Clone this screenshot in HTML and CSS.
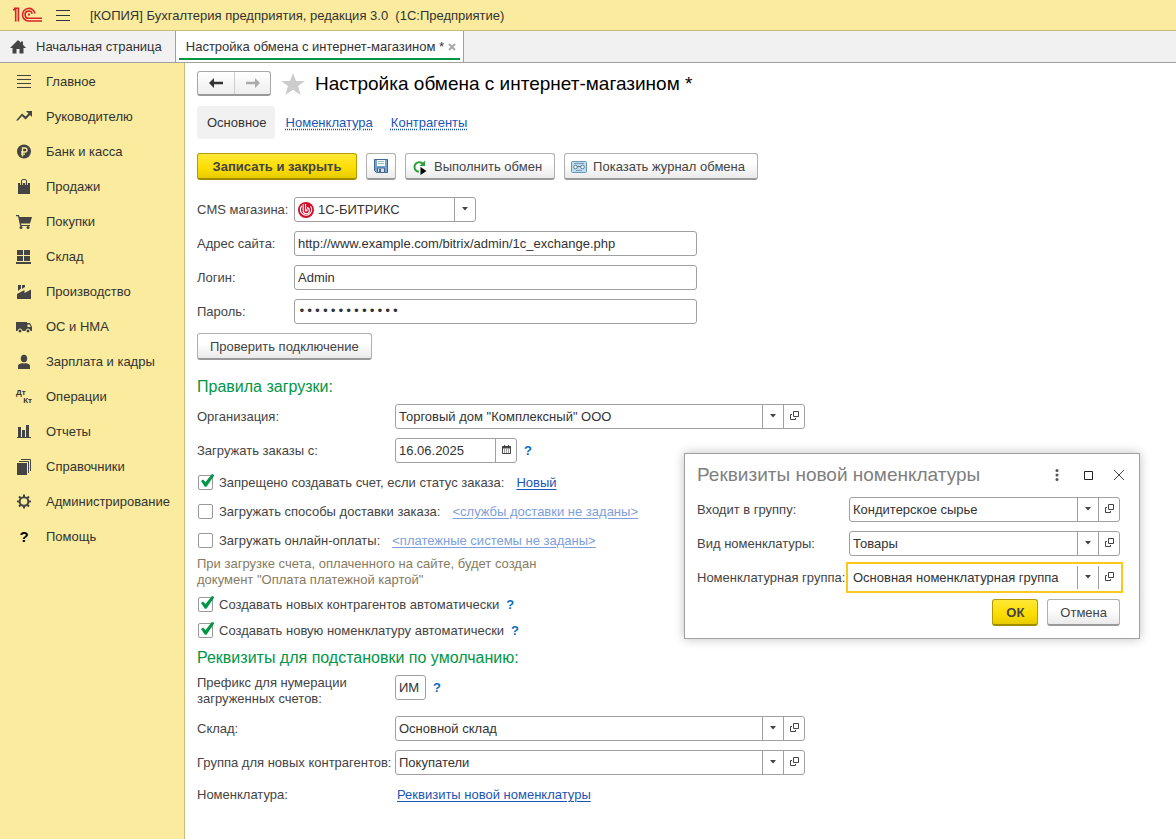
FILE: index.html
```html
<!DOCTYPE html>
<html lang="ru">
<head>
    <meta charset="UTF-8">
    <meta name="viewport" content="width=device-width, initial-scale=1.0">
    <title>Настройка обмена с интернет-магазином</title>
    <link rel="stylesheet" href="styles.css">
</head>
<body>
    <svg class="sprite" width="0" height="0" aria-hidden="true">
        <symbol id="i-arrow" viewBox="0 0 6 4"><path d="M0 0h6L3 3.5z" fill="#444"/></symbol>
        <symbol id="i-open" viewBox="0 0 9 9"><path d="M3.500.5h5v5h-5zM2 3.500H.5v5h5V7" fill="none" stroke="#444"/></symbol>
    </svg>

    <header class="topbar">
        <svg class="logo" width="30" height="16" viewBox="0 0 30 16" fill="none" stroke="#d9232b" stroke-width="1.600">
            <path d="M0 2.800h2.700v11.700M1 1.200h4.400v13.300"/>
            <path d="M22 6.500A6.300 6.300 0 1 0 15.500 14H29"/>
            <path d="M19.200 6.800A3.600 3.600 0 1 0 15.800 11.300H29"/>
            <path d="M15 7.500h2" stroke-width="2"/>
        </svg>
        <button class="burger" aria-label="Меню"><span></span><span></span><span></span></button>
        <span class="app-name">[КОПИЯ] Бухгалтерия предприятия, редакция 3.0&nbsp; (1С:Предприятие)</span>
    </header>

    <nav class="tabs">
        <a href="#" class="tab">
            <svg width="16" height="14" viewBox="0 0 16 14" fill="#444"><path d="M8 0l3 2.800V1.500h2v3.200L16 8h-2.500v5.500H9.500V9h-3v4.500h-4V8H0z"/></svg>
            Начальная страница
        </a>
        <div class="tab active">
            <span>Настройка обмена с интернет-магазином *</span>
            <button class="tab-close" aria-label="Закрыть вкладку">
                <svg width="8" height="8" viewBox="0 0 8 8" stroke="#aaa" stroke-width="2"><path d="M1 1l6 6M7 1L1 7"/></svg>
            </button>
        </div>
    </nav>

    <div class="workspace">
        <aside class="sidebar">
            <a href="#"><svg viewBox="0 0 16 16" stroke="#444" stroke-width="1"><path d="M1 1.500h14M1 5.500h14M1 9.500h14M1 13.500h14"/></svg>Главное</a>
            <a href="#"><svg viewBox="0 0 16 16" fill="#444"><path d="M10 2h6v6l-2-2-4.500 4.500L6 7 2 11.500H0L6 4.500l3.500 3L12.500 4.500z"/></svg>Руководителю</a>
            <a href="#"><svg viewBox="0 0 16 16"><circle cx="8" cy="7.500" r="7" fill="#444"/><path d="M6.500 12.500V4H9a2 2 0 0 1 0 4H5M5 10.200h4" fill="none" stroke="#faeb9e" stroke-width="1.300"/></svg>Банк и касса</a>
            <a href="#"><svg viewBox="0 0 16 16"><path d="M2 4h12v11H2z" fill="#444"/><path d="M5.500 6V2.500A1.500 1.500 0 0 1 7 1h2a1.500 1.500 0 0 1 1.500 1.500V6" fill="none" stroke="#faeb9e" stroke-width="2.600"/><path d="M5.500 6V2A1.500 1.500 0 0 1 7 .5h2A1.500 1.500 0 0 1 10.500 2v4" fill="none" stroke="#444"/></svg>Продажи</a>
            <a href="#"><svg viewBox="0 0 16 16" fill="#444"><path d="M0 1h3l.6 2H16l-2 6.500H5l.3 1.500H14v1H4.200L2 2.200H0z"/><circle cx="5" cy="13.500" r="1.500"/><circle cx="12" cy="13.500" r="1.500"/></svg>Покупки</a>
            <a href="#"><svg viewBox="0 0 16 16" fill="#444"><path d="M1 1h6v5H1zM8 1h6v5H8zM1 7h6v5H1zM8 7h6v5H8zM0 13h15v2H0z"/></svg>Склад</a>
            <a href="#"><svg viewBox="0 0 16 16" fill="#444"><path d="M1 15V10l7.500-4v3L15 5.500V15zM2 1h3v3.500L2 7zM6 1h3v2L6 5z"/></svg>Производство</a>
            <a href="#"><svg viewBox="0 0 16 16"><path d="M0 3h11v1h3l2 4v4H0z" fill="#444"/><path d="M11.500 5.500h2l1.200 2.500h-3.200z" fill="#faeb9e"/><g fill="#444" stroke="#faeb9e"><circle cx="4" cy="12" r="2"/><circle cx="12" cy="12" r="2"/></g></svg>ОС и НМА</a>
            <a href="#"><svg viewBox="0 0 16 16" fill="#444"><ellipse cx="8" cy="4.500" rx="3.200" ry="3.800"/><path d="M2 15v-3q0-1.500 1.500-2L6.500 9q1.500 1 3 0l3 1q1.500.5 1.500 2v3z"/></svg>Зарплата и кадры</a>
            <a href="#"><span class="dtkt" aria-hidden="true"><b>Дт</b><b>Кт</b></span>Операции</a>
            <a href="#"><svg viewBox="0 0 16 16" fill="#444"><path d="M2 3h3v10H2zM6 6h3v7H6zM10 1h3v12h-3zM1 13h14v1H1z"/></svg>Отчеты</a>
            <a href="#"><svg viewBox="0 0 16 16"><path d="M1 4h10v12H1z" fill="#444"/><path d="M3 2.500h9.500V14M5 .5h9.500V12" fill="none" stroke="#444"/></svg>Справочники</a>
            <a href="#"><svg viewBox="0 0 16 16" fill="none" stroke="#444"><circle cx="8" cy="7.500" r="4.300" stroke-width="2"/><path d="M8 .5V3M8 12v2.500M1 7.500h2.500M12.500 7.500H15M3 2.500l1.800 1.800M11.200 10.700l1.800 1.800M13 2.500l-1.800 1.800M4.800 10.700L3 12.500" stroke-width="2"/></svg>Администрирование</a>
            <a href="#"><b class="qmark">?</b>Помощь</a>
        </aside>

        <main class="content">
            <div class="title-row">
                <div class="history">
                    <button aria-label="Назад"><svg width="14" height="10" viewBox="0 0 14 10" fill="#333"><path d="M0 5l5-5v3.800h9v2.400H5V10z"/></svg></button>
                    <button aria-label="Вперед"><svg width="14" height="10" viewBox="0 0 14 10" fill="#aaa"><path d="M14 5L9 0v3.800H0v2.400h9V10z"/></svg></button>
                </div>
                <svg class="star" width="24" height="22" viewBox="0 0 24 22" fill="#ccc"><path d="M12 0l3 8h9l-7 5 2.700 9L12 16.800 4.300 22 7 13 0 8h9z"/></svg>
                <h1>Настройка обмена с интернет-магазином *</h1>
            </div>

            <nav class="sections">
                <span class="current">Основное</span>
                <a href="#">Номенклатура</a>
                <a href="#">Контрагенты</a>
            </nav>

            <div class="toolbar">
                <button class="btn primary">Записать и закрыть</button>
                <button class="btn icon-only" aria-label="Записать">
                    <svg width="14" height="14" viewBox="0 0 14 14"><path d="M.5.5h13v13h-11l-2-2z" fill="#74a4d4" stroke="#40678f"/><path d="M3 1h8v6H3z" fill="#fff"/><path d="M4 2.500h6M4 4.500h6" stroke="#9bb"/><path d="M3.500 9h7v4.500h-7z" fill="#ddd" stroke="#40678f"/><path d="M5 10h2v3H5z" fill="#40678f"/></svg>
                </button>
                <button class="btn">
                    <svg width="16" height="16" viewBox="0 0 16 16"><path d="M11 5A4.800 4.800 0 1 0 7 12.800" fill="none" stroke="#2aa13a" stroke-width="2"/><path d="M13 1.500v5.500H7.500z" fill="#2aa13a"/><path d="M8.500 8l6 4-6 4z" fill="#000"/></svg>
                    Выполнить обмен
                </button>
                <button class="btn">
                    <svg width="16" height="12" viewBox="0 0 16 12"><rect x=".5" y=".5" width="15" height="11" rx="1" fill="#bcdcf2" stroke="#6a94b5"/><path d="M3 2.500h10M5 9.500h6" stroke="#7c99ad"/><g fill="#fff" stroke="#55798f"><circle cx="4.500" cy="6" r="1.800"/><circle cx="11.500" cy="6" r="1.800"/></g><path d="M6 5.500h4" stroke="#55798f"/></svg>
                    Показать журнал обмена
                </button>
            </div>

            <form class="connection">
                <label for="cms">CMS магазина:</label>
                <div class="field cms">
                    <svg class="bitrix" width="16" height="16" viewBox="0 0 17 17"><circle cx="8.500" cy="8.500" r="8.500" fill="#d0112b"/><g fill="none" stroke="#fff" stroke-width="1.200"><path d="M4 4.200a6 6 0 1 0 9.300.3"/><path d="M5.500 2.500v6.700a3.300 3.300 0 1 0 4-3.200"/><path d="M8 2v7.500q2 .5 1.500-1.800"/></g></svg>
                    <div class="pick"><select id="cms"><option>1С-БИТРИКС</option></select><svg><use href="#i-arrow"/></svg></div>
                </div>

                <label for="site">Адрес сайта:</label>
                <input class="field" id="site" type="text" value="http://www.example.com/bitrix/admin/1c_exchange.php">

                <label for="login">Логин:</label>
                <input class="field" id="login" type="text" value="Admin">

                <label for="password">Пароль:</label>
                <input class="field" id="password" type="password" value="1234567890123">
            </form>
            <button class="btn check-btn">Проверить подключение</button>

            <h2>Правила загрузки:</h2>
            <div class="rules">
                <label for="org">Организация:</label>
                <div class="field wide">
                    <div class="pick"><select id="org"><option>Торговый дом "Комплексный" ООО</option></select><svg><use href="#i-arrow"/></svg></div>
                    <button aria-label="Открыть"><svg><use href="#i-open"/></svg></button>
                </div>

                <label for="from">Загружать заказы с:</label>
                <div class="inline">
                    <div class="field date">
                        <input id="from" type="text" value="16.06.2025">
                        <button aria-label="Календарь"><svg viewBox="0 0 9 9"><path d="M.5 1.500h8v7h-8z" fill="none" stroke="#444"/><path d="M0 1h9v2.500H0zM2 0h1v2H2zM6 0h1v2H6z" fill="#444"/><path d="M2 5h5M2 7h5" stroke="#444" stroke-dasharray="1 1"/></svg></button>
                    </div>
                    <a href="#" class="help">?</a>
                </div>
            </div>

            <div class="checks">
                <div class="check-row"><input type="checkbox" id="c1" checked><label for="c1">Запрещено создавать счет, если статус заказа:</label><a href="#">Новый</a></div>
                <div class="check-row"><input type="checkbox" id="c2"><label for="c2">Загружать способы доставки заказа:</label><a href="#" class="muted">&lt;службы доставки не заданы&gt;</a></div>
                <div class="check-row"><input type="checkbox" id="c3"><label for="c3">Загружать онлайн-оплаты:</label><a href="#" class="muted">&lt;платежные системы не заданы&gt;</a></div>
            </div>
            <p class="note">При загрузке счета, оплаченного на сайте, будет создан<br>документ "Оплата платежной картой"</p>
            <div class="checks auto">
                <div class="check-row"><input type="checkbox" id="c4" checked><label for="c4">Создавать новых контрагентов автоматически</label><a href="#" class="help">?</a></div>
                <div class="check-row"><input type="checkbox" id="c5" checked><label for="c5">Создавать новую номенклатуру автоматически</label><a href="#" class="help">?</a></div>
            </div>

            <h2>Реквизиты для подстановки по умолчанию:</h2>
            <div class="rules defaults">
                <label for="prefix">Префикс для нумерации<br>загруженных счетов:</label>
                <div class="inline top">
                    <input class="field prefix" id="prefix" type="text" value="ИМ">
                    <a href="#" class="help">?</a>
                </div>

                <label for="store">Склад:</label>
                <div class="field wide">
                    <div class="pick"><select id="store"><option>Основной склад</option></select><svg><use href="#i-arrow"/></svg></div>
                    <button aria-label="Открыть"><svg><use href="#i-open"/></svg></button>
                </div>

                <label for="group">Группа для новых контрагентов:</label>
                <div class="field wide">
                    <div class="pick"><select id="group"><option>Покупатели</option></select><svg><use href="#i-arrow"/></svg></div>
                    <button aria-label="Открыть"><svg><use href="#i-open"/></svg></button>
                </div>

                <span>Номенклатура:</span>
                <a href="#" class="item-link">Реквизиты новой номенклатуры</a>
            </div>
        </main>
    </div>

    <section class="dialog" role="dialog" aria-labelledby="dialog-title">
        <div class="dialog-head">
            <h2 id="dialog-title">Реквизиты новой номенклатуры</h2>
            <button aria-label="Еще"><svg width="12" height="12" viewBox="0 0 12 12" fill="#555"><circle cx="6" cy="1.500" r="1.500"/><circle cx="6" cy="6" r="1.500"/><circle cx="6" cy="10.500" r="1.500"/></svg></button>
            <button aria-label="Развернуть"><svg width="12" height="12" viewBox="0 0 12 12"><path d="M2.500 2.500h8v8h-8z" fill="none" stroke="#222"/></svg></button>
            <button aria-label="Закрыть"><svg width="12" height="12" viewBox="0 0 12 12" stroke="#444"><path d="M1 1l10 10M11 1L1 11"/></svg></button>
        </div>
        <div class="dialog-body">
            <label for="d1">Входит в группу:</label>
            <div class="field">
                <div class="pick"><select id="d1"><option>Кондитерское сырье</option></select><svg><use href="#i-arrow"/></svg></div>
                <button aria-label="Открыть"><svg><use href="#i-open"/></svg></button>
            </div>

            <label for="d2">Вид номенклатуры:</label>
            <div class="field">
                <div class="pick"><select id="d2"><option>Товары</option></select><svg><use href="#i-arrow"/></svg></div>
                <button aria-label="Открыть"><svg><use href="#i-open"/></svg></button>
            </div>

            <label for="d3">Номенклатурная группа:</label>
            <div class="field focused">
                <div class="pick"><select id="d3"><option>Основная номенклатурная группа</option></select><svg><use href="#i-arrow"/></svg></div>
                <button aria-label="Открыть"><svg><use href="#i-open"/></svg></button>
            </div>
        </div>
        <div class="dialog-actions">
            <button class="btn primary">ОК</button>
            <button class="btn">Отмена</button>
        </div>
    </section>
</body>
</html>
```
FILE: styles.css
```css
* {
    box-sizing: border-box;
}

body {
    margin: 0;
    min-height: 100vh;
    display: flex;
    flex-direction: column;
    position: relative;
    background-color: #fff;
    color: #444;
    font-family: 'Liberation Sans', Arial, sans-serif;
    font-size: 13px;
    line-height: 16px;
}

button,
input,
select {
    font: inherit;
    color: inherit;
}

button {
    display: flex;
    align-items: center;
    justify-content: center;
    padding: 0;
    border: none;
    background: none;
    cursor: pointer;
}

a {
    color: #1a55b5;
    text-underline-offset: 2px;
}

svg {
    flex: none;
}

.sprite {
    position: absolute;
}

/* top bar */
.topbar {
    display: flex;
    align-items: center;
    height: 31px;
    padding-left: 13px;
    background-color: #faeb9e;
    border-bottom: 1px solid #c8bb78;
}

.burger {
    flex-direction: column;
    gap: 4px;
    margin: 0 20px 0 13px;
}

.burger span {
    width: 14px;
    height: 1px;
    background-color: #333;
}

.app-name {
    padding-top: 1px;
    color: #333;
}

/* open windows */
.tabs {
    display: flex;
    height: 32px;
    background-color: #f1f1f1;
    border-bottom: 1px solid #a0a0a0;
}

.tab {
    display: flex;
    align-items: center;
    gap: 10px;
    padding: 0 13px 0 10px;
    color: #333;
    text-decoration: none;
}

.tab.active {
    position: relative;
    gap: 4px;
    padding: 0 7px 0 10px;
    background-color: #fff;
    border: solid #a0a0a0;
    border-width: 0 1px;
}

.tab.active::after {
    content: "";
    position: absolute;
    left: 3px;
    right: 3px;
    bottom: 2px;
    height: 2px;
    background-color: #009646;
}

.workspace {
    flex: 1;
    display: flex;
}

/* sidebar */
.sidebar {
    flex: none;
    width: 185px;
    padding-top: 1px;
    background-color: #faeb9e;
    border-right: 1px solid #c8bb78;
}

.sidebar a {
    display: flex;
    align-items: center;
    gap: 14px;
    height: 35px;
    padding-left: 16px;
    color: #333;
    text-decoration: none;
}

.sidebar svg {
    width: 16px;
    height: 16px;
}

.qmark {
    width: 16px;
    color: #000;
    font-size: 15px;
    text-align: center;
}

.dtkt {
    display: flex;
    flex-direction: column;
    width: 16px;
    font-size: 8px;
    line-height: 8px;
}

.dtkt b:last-child {
    text-align: right;
}

/* form */
.content {
    flex: 1;
    padding: 8px 12px 32px;
}

.title-row {
    display: flex;
    align-items: center;
    height: 25px;
}

.history {
    display: flex;
    border: 1px solid #a8a8a8;
    border-bottom: 2px solid #999;
    border-radius: 3px;
    background: linear-gradient(#fff, #eee);
}

.history button {
    width: 36px;
    height: 22px;
}

.history button + button {
    border-left: 1px solid #ccc;
}

.star {
    margin: 0 10px;
}

h1 {
    margin: 0;
    color: #000;
    font-size: 19px;
    font-weight: normal;
    line-height: 24px;
}

h2 {
    margin: 0;
    color: #009646;
    font-size: 16px;
    font-weight: normal;
    line-height: 20px;
}

.sections {
    display: flex;
    align-items: center;
    margin: 10px 0 14px;
}

.sections .current {
    padding: 9px 8px 8px 10px;
    color: #333;
    background-color: #f1f1f1;
    border-radius: 4px;
}

.sections a {
    margin: 1px 7px 0 11px;
    text-decoration: underline dotted;
}

.toolbar {
    display: flex;
    gap: 9px;
    margin-bottom: 17px;
}

.btn {
    height: 27px;
    padding: 1px 12px 0;
    gap: 6px;
    border: 1px solid #b0b0b0;
    border-bottom: 2px solid #999;
    border-radius: 3px;
    background: linear-gradient(#fff 40%, #eaeaea);
}

.btn svg {
    margin-left: -6px;
}

.btn.icon-only {
    width: 30px;
    padding: 0;
}

.btn.icon-only svg {
    margin: 0;
}

.btn.primary {
    padding: 1px 13px 0;
    border: 1px solid #b09b00;
    border-bottom: 2px solid #a08c00;
    background: linear-gradient(#ffe838, #fbdd00 60%, #e8cb00);
    font-weight: bold;
}

.toolbar .primary {
    min-width: 160px;
}

.connection,
.rules {
    display: grid;
    grid-template-columns: 97px 403px;
    row-gap: 9px;
    align-items: center;
}

.rules {
    grid-template-columns: 198px 410px;
    margin-top: 7px;
}

.field {
    display: flex;
    width: 100%;
    height: 25px;
    padding: 0 0 0 3px;
    border: 1px solid #a0a0a0;
    border-radius: 3px;
    background-color: #fff;
    color: #333;
}

.field.cms {
    width: 182px;
    align-items: center;
}

.field.cms select {
    padding-left: 4px;
}

.field.date {
    width: 122px;
}

.field.prefix {
    width: 31px;
}

.field > input {
    flex: 1;
    min-width: 0;
    padding: 0;
    border: none;
    background: none;
}

.field > button {
    width: 21px;
    padding-bottom: 2px;
    border-left: 1px solid #a0a0a0;
}

.field > button svg {
    width: 9px;
    height: 9px;
}

.pick {
    position: relative;
    flex: 1;
    height: 100%;
}

.pick select {
    width: 100%;
    height: 100%;
    padding: 0;
    border: none;
    background: none;
    appearance: none;
}

/* arrow lies over the right end of the select */
.pick svg {
    position: absolute;
    top: 0;
    right: 0;
    width: 21px;
    height: 100%;
    padding: 9px 7px 10px;
    border-left: 1px solid #a0a0a0;
    pointer-events: none;
}

#password {
    font-family: 'Liberation Mono', monospace;
}

.check-btn {
    margin: 9px 0 17px;
}

.inline {
    display: flex;
    align-items: center;
    gap: 7px;
}

.inline.top {
    align-self: start;
}

.help {
    color: #0a6ebd;
    font-weight: bold;
    text-decoration: none;
}

.checks {
    display: flex;
    flex-direction: column;
    gap: 13px;
    margin-top: 12px;
}

.checks.auto {
    gap: 10px;
    margin: 9px 0;
}

.check-row {
    display: flex;
    align-items: center;
    height: 16px;
}

.check-row input {
    position: relative;
    width: 15px;
    height: 15px;
    margin: 0 6px 1px 1px;
    border: 1px solid #999;
    border-radius: 2px;
    background-color: #fff;
    appearance: none;
}

/* tick sticks out of the box at the top right */
.check-row input:checked::after {
    content: "";
    position: absolute;
    left: 2px;
    top: -2px;
    width: 13px;
    height: 13px;
    background-color: #009646;
    clip-path: polygon(0 54%, 16% 42%, 35% 62%, 84% 0, 104% 8%, 42% 98%, 30% 98%);
}

.check-row a {
    margin-left: 12px;
}

.check-row .help {
    margin-left: 7px;
}

.check-row .muted {
    color: #7da0dc;
}

.note {
    margin: 7px 0 0;
    color: #857b62;
}

.defaults .item-link {
    justify-self: start;
    margin: 3px 0 3px 2px;
}

/* dialog */
.dialog {
    position: absolute;
    top: 453px;
    right: 36px;
    width: 456px;
    padding: 9px 16px 12px 12px;
    background-color: #fff;
    border: 1px solid #a0a0a0;
    box-shadow: 0 0 10px rgba(0, 0, 0, 0.25);
}

.dialog-head {
    display: flex;
    align-items: center;
    gap: 19px;
    height: 24px;
    margin: 0 -2px 10px 0;
}

.dialog-head h2 {
    flex: 1;
    color: #808080;
    font-size: 19px;
}

.dialog-body {
    display: grid;
    grid-template-columns: 152px 1fr;
    row-gap: 9px;
    align-items: center;
    margin-right: 3px;
}

.focused {
    border-color: transparent;
    outline: 2px solid #fbc81e;
    outline-offset: 1px;
    border-radius: 0;
}

.dialog-actions {
    display: flex;
    justify-content: flex-end;
    gap: 9px;
    margin: 9px 3px 0 0;
}
```
